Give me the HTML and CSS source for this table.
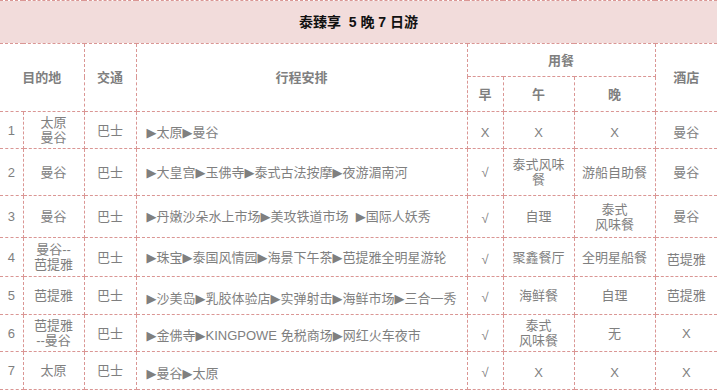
FILE: index.html
```html
<!DOCTYPE html>
<html lang="zh-CN">
<head>
<meta charset="utf-8">
<title>泰臻享 5 晚 7 日游</title>
<link rel="stylesheet" href="styles.css">
</head>
<body>
<table class="trip">
  <colgroup>
    <col class="c-day">
    <col class="c-dest">
    <col class="c-trans">
    <col class="c-plan">
    <col class="c-bf">
    <col class="c-lunch">
    <col class="c-dinner">
    <col class="c-hotel">
  </colgroup>
  <thead>
    <tr class="r-title">
      <th colspan="8" class="title">泰臻享&nbsp; 5 晚 7 日游</th>
    </tr>
    <tr class="r-head1">
      <th colspan="2" rowspan="2" class="head">目的地</th>
      <th rowspan="2" class="head">交通</th>
      <th rowspan="2" class="head">行程安排</th>
      <th colspan="3" class="head meals">用餐</th>
      <th rowspan="2" class="head">酒店</th>
    </tr>
    <tr class="r-head2">
      <th class="head sub">早</th>
      <th class="head sub">午</th>
      <th class="head sub">晚</th>
    </tr>
  </thead>
  <tbody>
    <tr class="r1">
      <td>1</td><td>太原<br>曼谷</td><td>巴士</td>
      <td class="plan"><span class="ar">▶</span>太原<span class="ar">▶</span>曼谷</td>
      <td class="low">X</td><td class="low">X</td><td class="low">X</td><td class="low">曼谷</td>
    </tr>
    <tr class="r2">
      <td>2</td><td>曼谷</td><td>巴士</td>
      <td class="plan2"><span class="ar">▶</span>大皇宫<span class="ar">▶</span>玉佛寺<span class="ar">▶</span>泰式古法按摩<span class="ar">▶</span>夜游湄南河</td>
      <td>√</td><td>泰式风味<br>餐</td><td>游船自助餐</td><td>曼谷</td>
    </tr>
    <tr class="r3">
      <td>3</td><td>曼谷</td><td>巴士</td>
      <td class="plan2"><span class="ar">▶</span>丹嫩沙朵水上市场<span class="ar">▶</span>美攻铁道市场 &nbsp;<span class="ar">▶</span>国际人妖秀</td>
      <td class="low">√</td><td>自理</td><td>泰式<br>风味餐</td><td>曼谷</td>
    </tr>
    <tr class="r4">
      <td>4</td><td>曼谷--<br>芭提雅</td><td>巴士</td>
      <td class="plan2"><span class="ar">▶</span>珠宝<span class="ar">▶</span>泰国风情园<span class="ar">▶</span>海景下午茶<span class="ar">▶</span>芭提雅全明星游轮</td>
      <td class="low">√</td><td>聚鑫餐厅</td><td>全明星船餐</td><td class="low">芭堤雅</td>
    </tr>
    <tr class="r5">
      <td>5</td><td>芭提雅</td><td>巴士</td>
      <td class="plan"><span class="ar">▶</span>沙美岛<span class="ar">▶</span>乳胶体验店<span class="ar">▶</span>实弹射击<span class="ar">▶</span>海鲜市场<span class="ar">▶</span>三合一秀</td>
      <td class="low">√</td><td>海鲜餐</td><td>自理</td><td>芭提雅</td>
    </tr>
    <tr class="r6">
      <td>6</td><td>芭提雅<br>--曼谷</td><td>巴士</td>
      <td class="plan"><span class="ar">▶</span>金佛寺<span class="ar">▶</span>KINGPOWE 免税商场<span class="ar">▶</span>网红火车夜市</td>
      <td class="low">√</td><td>泰式<br>风味餐</td><td>无</td><td>X</td>
    </tr>
    <tr class="r7">
      <td>7</td><td>太原</td><td>巴士</td>
      <td class="plan"><span class="ar">▶</span>曼谷<span class="ar">▶</span>太原</td>
      <td class="low">√</td><td class="low">X</td><td class="low">X</td><td class="low">X</td>
    </tr>
  </tbody>
</table>
</body>
</html>
```
FILE: styles.css
```css
html, body {
  margin: 0;
  padding: 0;
  background: #ffffff;
  overflow: hidden;
}

.trip {
  width: 717px;
  border-collapse: collapse;
  table-layout: fixed;
  font-family: "Liberation Sans", "DejaVu Sans", "Noto Sans CJK SC", sans-serif;
  font-size: 13px;
  line-height: 15px;
  color: #7f7f7f;
}

.c-day { width: 23px; }
.c-dest { width: 61px; }
.c-trans { width: 52px; }
.c-plan { width: 331px; }
.c-bf { width: 36px; }
.c-lunch { width: 71px; }
.c-dinner { width: 81px; }
.c-hotel { width: 62px; }

.trip th,
.trip td {
  border: 1px dashed #da9694;
  padding: 0 2px;
  text-align: center;
  vertical-align: middle;
  white-space: nowrap;
  overflow: hidden;
}

.trip tr > :first-child { border-left: none; }
.trip tr > :last-child { border-right: none; }
.trip .r-title > th { border-left: none; border-right: none; }
.trip .r-head2 > th:last-child { border-right: 1px dashed #da9694; }
.trip .r-head2 > th:first-child { border-left: 1px dashed #da9694; }

.title {
  background: #f2dcdb;
  color: #111111;
  font-size: 14px;
  font-weight: bold;
  height: 42px;
}

.head {
  font-weight: bold;
  color: #7f7f7f;
}

.r-head1 { height: 33px; }
.r-head2 { height: 35px; }

.meals { padding-top: 10px; }
.sub { padding-top: 8px; }

.r1 { height: 37px; }
.r2 { height: 47px; }
.r3 { height: 42px; }
.r4 { height: 39px; }
.r5 { height: 38px; }
.r6 { height: 37px; }
.r7 { height: 38px; }

.trip td.plan,
.trip td.plan2 {
  text-align: left;
  padding-left: 10px;
}

.trip td.plan { padding-top: 5px; }
.trip td.low { padding-top: 4px; }

.ar {
  font-family: "DejaVu Sans", sans-serif;
  font-size: 13px;
}
```
